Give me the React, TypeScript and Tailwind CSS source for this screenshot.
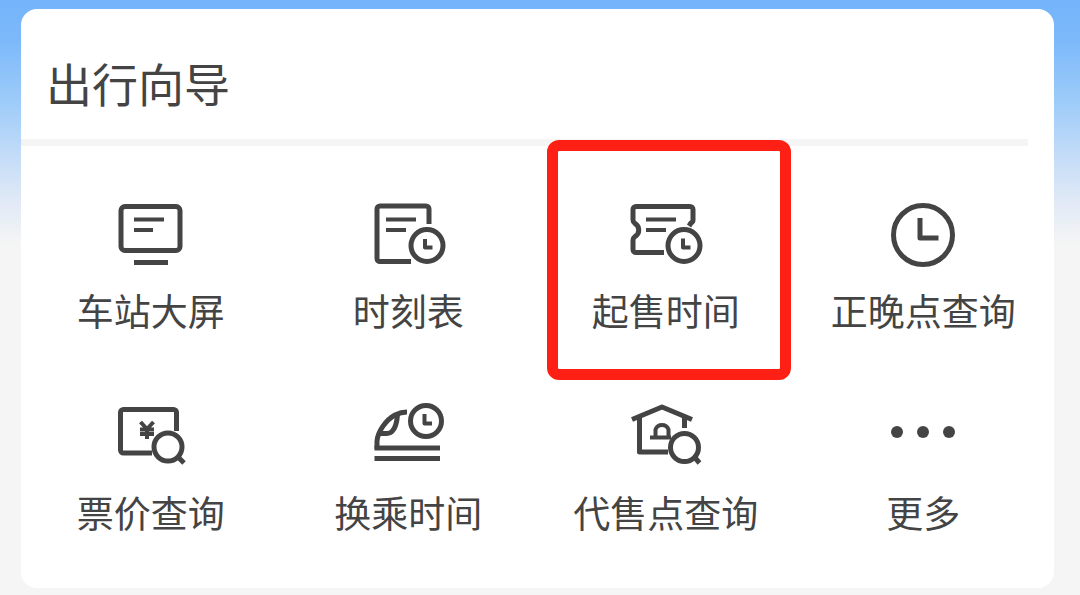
import React, { FC, ReactNode } from 'react';

interface IGuideItem {
    label: string;
    icon: ReactNode;
    marked?: boolean;
}

const Icon: FC<{ children: ReactNode }> = ({ children }) => (
    <svg
        viewBox="0 0 80 72"
        className="w-20 h-[72px]"
        fill="none"
        stroke="currentColor"
        strokeWidth="5"
        strokeLinejoin="round"
        aria-hidden="true"
    >
        {children}
    </svg>
);

const ScreenIcon = () => (
    <Icon>
        <rect x="10" y="8.5" width="59" height="44" rx="4" />
        <path d="M23 21.5h30M23 32h19" strokeWidth="4" />
        <path d="M23 64.5h34" />
    </Icon>
);

const TimetableIcon = () => (
    <Icon>
        <path d="M43 63.5H12a3 3 0 0 1-3-3V11a3 3 0 0 1 3-3h46a3 3 0 0 1 3 3v15" />
        <path d="M18 21.5h30M18 32h20" strokeWidth="4" />
        <circle cx="59" cy="47.5" r="16" />
        <path d="M57 41v8.5h7.5" strokeWidth="4" />
    </Icon>
);

const TicketIcon = () => (
    <Icon>
        <path d="M38 54.5H10a3 3 0 0 1-3-3V42q0-2 2-3.5c5-3 5-10 0-13q-2-1.5-2-3.5V11.5a3 3 0 0 1 3-3h54a3 3 0 0 1 3 3V22q0 2-2 3l-2 3" />
        <path d="M20 21.5h30M20 32h20" strokeWidth="4" />
        <circle cx="58" cy="47.5" r="16" />
        <path d="M57 40.5v9h7.5" strokeWidth="4" />
    </Icon>
);

const ClockIcon = () => (
    <Icon>
        <circle cx="40" cy="37" r="29.5" />
        <path d="M37 20v20h18.5" />
    </Icon>
);

const PriceIcon = () => (
    <Icon>
        <path d="M41 53H12.5a3 3 0 0 1-3-3V12.5a3 3 0 0 1 3-3h50a3 3 0 0 1 3 3V31" />
        <path d="M29.5 22l6.5 7 6.5-7M36 28v11M29 29.5h14M29 34h14" strokeWidth="4" />
        <circle cx="57" cy="47" r="14" />
        <path d="M66 56l7 7" />
    </Icon>
);

const TransferIcon = () => (
    <Icon>
        <path d="M9 49V41C10 31 18 20 27 15q6-3 12-3" />
        <path d="M12 33.5h7q3 0 5-2c4-4 5-9 5.5-17" />
        <path d="M6.5 48H72M6.5 58.5H72" />
        <circle cx="58" cy="21" r="15.5" />
        <path d="M56.5 14v9.500H64" strokeWidth="4" />
    </Icon>
);

const AgencyIcon = () => (
    <Icon>
        <path d="M6 19.5L36 7l30 12.5M13.500 18v34H42M58.5 18v10" />
        <path d="M29.5 37v-7.5a7 7 0 0 1 13 0V37M24 37.5h21" strokeWidth="4" />
        <circle cx="58.5" cy="47.5" r="14" />
        <path d="M67.500 56l6 7" />
    </Icon>
);

const MoreIcon = () => (
    <Icon>
        <g fill="currentColor" stroke="none">
            <circle cx="14" cy="32" r="6" />
            <circle cx="40" cy="32" r="6" />
            <circle cx="66" cy="32" r="6" />
        </g>
    </Icon>
);

const items: Array<IGuideItem> = [
    { label: '车站大屏', icon: <ScreenIcon /> },
    { label: '时刻表', icon: <TimetableIcon /> },
    { label: '起售时间', icon: <TicketIcon />, marked: true },
    { label: '正晚点查询', icon: <ClockIcon /> },
    { label: '票价查询', icon: <PriceIcon /> },
    { label: '换乘时间', icon: <TransferIcon /> },
    { label: '代售点查询', icon: <AgencyIcon /> },
    { label: '更多', icon: <MoreIcon /> },
];

const GuideButton: FC<IGuideItem> = ({ label, icon, marked }) => (
    <button type="button" className="relative flex flex-col items-center gap-[18px]">
        {icon}
        <span className="text-[37px] leading-[44px] whitespace-nowrap">{label}</span>
        {marked && (
            <span className="absolute -top-[58px] -bottom-12 left-2.5 right-1 rounded-xl border-[11px] border-[#ff2015] pointer-events-none" />
        )}
    </button>
);

const App: FC = () => {
    return (
        <div className="min-h-screen pt-[9px] pb-[7px] pl-[21px] pr-[26px] bg-[#f5f5f5] bg-[linear-gradient(180deg,#74b4fa_0px,#7cb9fa_40px,#9ccbf9_100px,#bfdaf8_150px,#e0e9f6_200px,#f5f5f5_245px)] text-[#444] font-['Noto_Sans_CJK_SC',sans-serif]">
            <main className="rounded-2xl bg-white">
                <h2 className="pt-[50px] pb-[34px] pl-[25px] text-[46px] leading-[46px]">出行向导</h2>

                {/* Divider stops short of the right edge */}
                <div className="h-[7px] mr-[26px] bg-[#f5f5f5]" />

                {/* Shortcuts */}
                <div className="grid grid-cols-4 gap-y-[68px] pt-[52px] pb-[54px] pl-px pr-0.5">
                    {items.map((item) => (
                        <GuideButton key={item.label} {...item} />
                    ))}
                </div>
            </main>
        </div>
    );
}

export default App;
